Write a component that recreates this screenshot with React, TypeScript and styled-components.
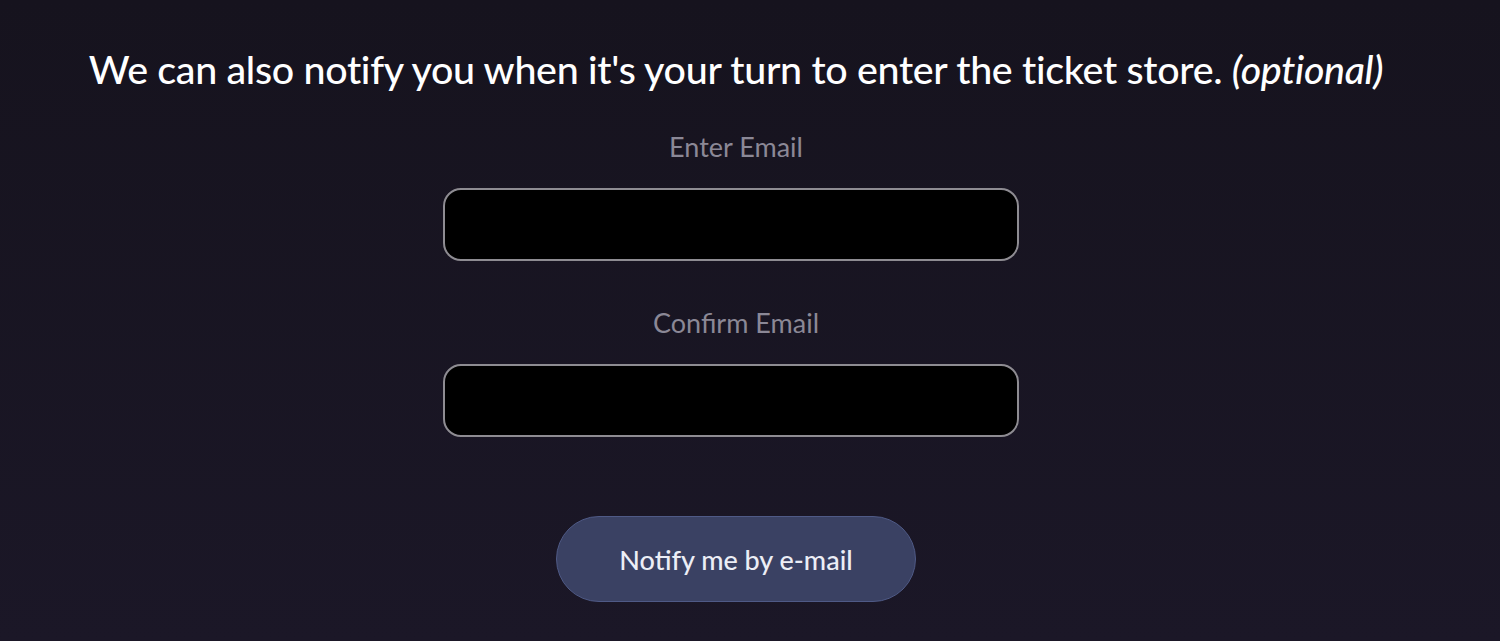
import React from "react";
import styled, { createGlobalStyle } from "styled-components";

const Global = createGlobalStyle`
  html, body { margin: 0; padding: 0; }
  body {
    background: linear-gradient(180deg, #16131e 0%, #1b1727 100%);
    min-height: 641px;
    font-family: Lato, "Noto Sans", sans-serif;
  }
`;

const Page = styled.main`
  box-sizing: border-box;
  width: 1472px;
  min-height: 641px;
  padding-top: 44px;
  display: flex;
  flex-direction: column;
  align-items: center;
`;

const Heading = styled.h2`
  margin: 0;
  color: #ffffff;
  font-size: 39.4px;
  font-weight: 500;
  line-height: 50px;
  letter-spacing: -0.32px;
  white-space: nowrap;
  em { font-style: italic; }
`;

const Form = styled.form`
  display: flex;
  flex-direction: column;
  align-items: center;
  margin-top: 37px;
`;

const Field = styled.div`
  display: flex;
  flex-direction: column;
  align-items: center;
  gap: 25px;
  margin-bottom: 46px;
`;

const Label = styled.label`
  color: #8b8896;
  font-size: 27px;
  line-height: 32px;
`;

const Input = styled.input`
  box-sizing: border-box;
  width: 576px;
  height: 73px;
  margin-right: 10px;
  background: #000;
  border: 2px solid #8e8c92;
  border-radius: 18px;
  color: #fff;
  font-size: 22px;
  padding: 0 20px;
  outline: none;
`;

const Button = styled.button`
  box-sizing: border-box;
  margin-top: 33px;
  width: 360px;
  height: 86px;
  border-radius: 43px;
  background: #3a4163;
  border: 1.5px solid #4f5a86;
  color: #eceef6;
  font-family: Lato, "Noto Sans", sans-serif;
  font-size: 27px;
  font-weight: 500;
  cursor: pointer;
`;

export default function App() {
  return (
    <>
      <Global />
      <Page>
        <Heading>
          We can also notify you when it's your turn to enter the ticket store. <em>(optional)</em>
        </Heading>
        <Form onSubmit={(e) => e.preventDefault()}>
          <Field>
            <Label htmlFor="email">Enter Email</Label>
            <Input id="email" type="email" />
          </Field>
          <Field>
            <Label htmlFor="confirm">Confirm Email</Label>
            <Input id="confirm" type="email" />
          </Field>
          <Button type="submit">Notify me by e-mail</Button>
        </Form>
      </Page>
    </>
  );
}
